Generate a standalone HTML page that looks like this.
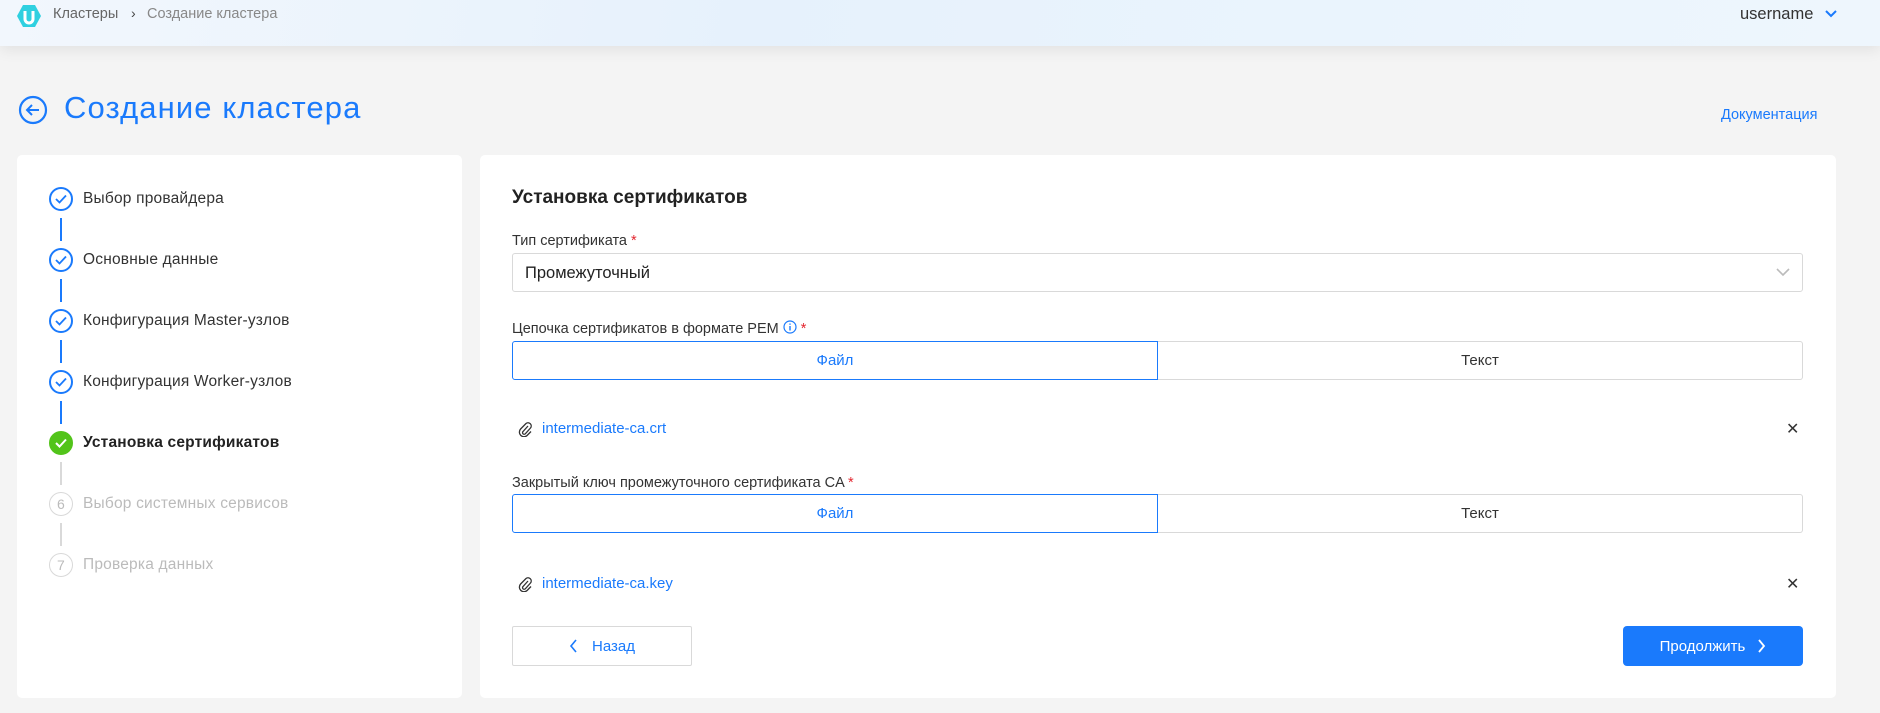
<!DOCTYPE html>
<html><head><meta charset="utf-8"><style>
*{box-sizing:border-box;margin:0;padding:0}
body{width:1880px;height:713px;background:#f4f4f4;font-family:"Liberation Sans",sans-serif;position:relative;overflow:hidden;color:#333}
.hdr{position:absolute;left:0;top:0;width:1880px;height:46px;background:linear-gradient(100deg,#f2f7fd 0%,#e6f1fc 40%,#eaf4fd 70%,#eef6fd 100%);box-shadow:0 4px 14px rgba(0,0,0,.08)}
.abs{position:absolute}
.card{position:absolute;background:#fff;border-radius:5px}
.step{position:absolute;left:49px;height:24px;display:flex;align-items:center;font-size:15.5px;letter-spacing:.2px}
.circ{width:24px;height:24px;border-radius:50%;border:2px solid #1a7afc;margin-right:10px;display:flex;align-items:center;justify-content:center;font-size:14px}
.line{position:absolute;left:60px;width:2px;height:23px;background:#1a7afc}
.lbl{position:absolute;left:512px;font-size:14.5px;color:#333}
.req{color:#e3262f}
.tabs{position:absolute;left:512px;width:1291px;height:39px;display:flex}
.tabs div{flex:1;display:flex;align-items:center;justify-content:center;font-size:15px}
.t1{border:1px solid #1a7afc;color:#1a7afc;border-radius:3px 0 0 3px}
.t2{border:1px solid #d9d9d9;border-left:none;border-radius:0 3px 3px 0;color:#333}
.file{position:absolute;left:518px;display:flex;align-items:center;font-size:15px;color:#1a7afc}
.x{position:absolute;left:1786px;font-size:16px;color:#333}
</style></head><body>
<div class="hdr"></div>
<svg class="abs" style="left:16px;top:4px" width="26" height="24" viewBox="0 0 26 24"><path d="M7 1h12l6 11-6 11H7L1 12z" fill="#2fd0e0"/><path d="M9 7v8a4 4 0 0 0 8 0V7" stroke="#fff" stroke-width="3" fill="none"/></svg>
<div class="abs" style="left:53px;top:6px;font-size:14.5px;color:#666">Кластеры</div>
<div class="abs" style="left:131px;top:5px;font-size:14px;color:#444">›</div>
<div class="abs" style="left:147px;top:6px;font-size:14.5px;color:#888">Создание кластера</div>
<div class="abs" style="left:1740px;top:5px;font-size:16.5px;color:#333">username</div>
<svg class="abs" style="left:1825px;top:10px" width="12" height="8" viewBox="0 0 12 8"><path d="M1 1l5 5 5-5" stroke="#1a7afc" stroke-width="2" fill="none"/></svg>

<svg class="abs" style="left:18px;top:95px" width="30" height="30" viewBox="0 0 30 30"><circle cx="15" cy="15" r="13" stroke="#1a7afc" stroke-width="2.2" fill="none"/><path d="M21 15H9M14 10l-5 5 5 5" stroke="#1a7afc" stroke-width="2" fill="none"/></svg>
<div class="abs" style="left:64px;top:90px;font-size:31px;color:#1a7afc;letter-spacing:1.1px">Создание кластера</div>
<div class="abs" style="left:1721px;top:107px;font-size:14.5px;color:#1a7afc">Документация</div>

<div class="card" style="left:17px;top:155px;width:445px;height:543px"></div>
<div class="step" style="top:187px"><div class="circ"><svg width="12" height="10" viewBox="0 0 12 10"><path d="M1 5l3.5 3.5L11 1.5" stroke="#1a7afc" stroke-width="1.8" fill="none"/></svg></div>Выбор провайдера</div>
<div class="line" style="top:218px"></div>
<div class="step" style="top:248px"><div class="circ"><svg width="12" height="10" viewBox="0 0 12 10"><path d="M1 5l3.5 3.5L11 1.5" stroke="#1a7afc" stroke-width="1.8" fill="none"/></svg></div>Основные данные</div>
<div class="line" style="top:279px"></div>
<div class="step" style="top:309px"><div class="circ"><svg width="12" height="10" viewBox="0 0 12 10"><path d="M1 5l3.5 3.5L11 1.5" stroke="#1a7afc" stroke-width="1.8" fill="none"/></svg></div>Конфигурация Master-узлов</div>
<div class="line" style="top:340px"></div>
<div class="step" style="top:370px"><div class="circ"><svg width="12" height="10" viewBox="0 0 12 10"><path d="M1 5l3.5 3.5L11 1.5" stroke="#1a7afc" stroke-width="1.8" fill="none"/></svg></div>Конфигурация Worker-узлов</div>
<div class="line" style="top:401px"></div>
<div class="step" style="top:431px;font-weight:bold;color:#222"><div class="circ" style="background:#52c41a;border-color:#52c41a"><svg width="12" height="10" viewBox="0 0 12 10"><path d="M1 5l3.5 3.5L11 1.5" stroke="#fff" stroke-width="2" fill="none"/></svg></div>Установка сертификатов</div>
<div class="line" style="top:462px;background:#d9d9d9"></div>
<div class="step" style="top:492px;color:#bbb"><div class="circ" style="border:1.5px solid #d9d9d9;color:#bbb">6</div>Выбор системных сервисов</div>
<div class="line" style="top:523px;background:#d9d9d9"></div>
<div class="step" style="top:553px;color:#bbb"><div class="circ" style="border:1.5px solid #d9d9d9;color:#bbb">7</div>Проверка данных</div>

<div class="card" style="left:480px;top:155px;width:1356px;height:543px"></div>
<div class="abs" style="left:512px;top:187px;font-size:19px;font-weight:bold;color:#222">Установка сертификатов</div>
<div class="lbl" style="top:233px">Тип сертификата <span class="req">*</span></div>
<div class="abs" style="left:512px;top:253px;width:1291px;height:39px;border:1px solid #d9d9d9;border-radius:3px;font-size:16.5px;padding:10px 12px;color:#222">Промежуточный</div>
<svg class="abs" style="left:1776px;top:268px" width="14" height="9" viewBox="0 0 14 9"><path d="M1 1l6 6 6-6" stroke="#bbb" stroke-width="1.6" fill="none"/></svg>
<div class="lbl" style="top:320px">Цепочка сертификатов в формате PEM <svg width="14" height="14" viewBox="0 0 14 14" style="vertical-align:-1px"><circle cx="7" cy="7" r="6" stroke="#1a7afc" stroke-width="1.2" fill="none"/><path d="M7 6v4.5M7 3.5v1.2" stroke="#1a7afc" stroke-width="1.4"/></svg> <span class="req">*</span></div>
<div class="tabs" style="top:341px"><div class="t1">Файл</div><div class="t2">Текст</div></div>
<div class="file" style="top:420px"><svg width="14" height="16" viewBox="0 0 14 16" style="margin-right:10px"><path d="M10 5L5 10.5a1.6 1.6 0 0 0 2.3 2.3L12.5 7a3.2 3.2 0 0 0-4.5-4.5L2.6 8a4.6 4.6 0 0 0 6.5 6.5L13 10.5" stroke="#333" stroke-width="1.3" fill="none"/></svg>intermediate-ca.crt</div>
<div class="x" style="top:419px">✕</div>
<div class="lbl" style="top:475px">Закрытый ключ промежуточного сертификата CA <span class="req">*</span></div>
<div class="tabs" style="top:494px"><div class="t1">Файл</div><div class="t2">Текст</div></div>
<div class="file" style="top:575px"><svg width="14" height="16" viewBox="0 0 14 16" style="margin-right:10px"><path d="M10 5L5 10.5a1.6 1.6 0 0 0 2.3 2.3L12.5 7a3.2 3.2 0 0 0-4.5-4.5L2.6 8a4.6 4.6 0 0 0 6.5 6.5L13 10.5" stroke="#333" stroke-width="1.3" fill="none"/></svg>intermediate-ca.key</div>
<div class="x" style="top:574px">✕</div>
<div class="abs" style="left:512px;top:626px;width:180px;height:40px;border:1px solid #d9d9d9;border-radius:2px;display:flex;align-items:center;justify-content:center;color:#1a7afc;font-size:15px"><svg width="9" height="14" viewBox="0 0 9 14" style="margin-right:14px"><path d="M7 1L2 7l5 6" stroke="#1a7afc" stroke-width="1.6" fill="none"/></svg>Назад</div>
<div class="abs" style="left:1623px;top:626px;width:180px;height:40px;background:#1a7afc;border-radius:4px;display:flex;align-items:center;justify-content:center;color:#fff;font-size:15px">Продолжить<svg width="9" height="14" viewBox="0 0 9 14" style="margin-left:12px"><path d="M2 1l5 6-5 6" stroke="#fff" stroke-width="1.8" fill="none"/></svg></div>
</body></html>
